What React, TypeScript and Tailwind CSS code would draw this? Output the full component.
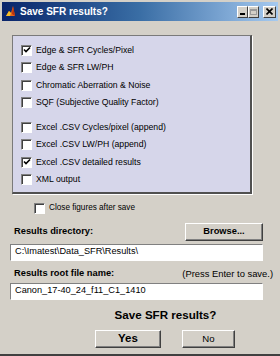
import React from 'react';

const sans = { fontFamily: '"Liberation Sans", Arial, sans-serif' };

function Check({ checked }: { checked?: boolean }) {
  return (
    <span className="w-[11px] h-[11px] shrink-0 bg-white border border-t-[#808080] border-l-[#808080] border-b-white border-r-white shadow-[inset_1px_1px_0_#404040] flex items-center justify-center">
      {checked && (
        <svg width="8" height="8" viewBox="0 0 8 8">
          <path d="M1 3.5 L3 5.5 L7 1.5" stroke="#000" strokeWidth="1.6" fill="none" />
        </svg>
      )}
    </span>
  );
}

function Row({ label, checked }: { label: string; checked?: boolean }) {
  return (
    <div className="h-[17.5px] flex items-center gap-[4px] pl-[8px]">
      <Check checked={checked} />
      <span className="text-[8.7px] text-black leading-none">{label}</span>
    </div>
  );
}

function WinBtn({ children, w, dim }: { children: React.ReactNode; w: string; dim?: boolean }) {
  return (
    <span
      className={`${w} h-[12px] bg-[#d4d0c8] border border-t-white border-l-white border-b-[#404040] border-r-[#404040] flex items-center justify-center ${dim ? 'text-[#9a9a9a]' : 'text-black'}`}
    >
      {children}
    </span>
  );
}

export default function App() {
  return (
    <div style={sans} className="w-[280px] h-[356px] bg-[#d4d0c8] pt-[2px] px-[2px] border-b-2 border-[#404040] overflow-hidden flex flex-col">
      {/* Title bar */}
      <div className="h-[19px] flex items-center bg-gradient-to-r from-[#0a246a] via-[#3a6ea5] to-[#a6caf0] pl-[2px] pr-[2px]">
        <svg width="13" height="13" viewBox="0 0 13 13" className="shrink-0">
          <path d="M2 11 L5 6 L7 8 L9 1 L11 11 Z" fill="#e8641b" />
          <path d="M5 6 L7 8 L6 11 L2 11 Z" fill="#f6c028" />
          <path d="M9 1 L11 11 L8 9 Z" fill="#b8330e" />
        </svg>
        <span className="ml-[3px] text-white font-bold text-[10px] leading-none">Save SFR results?</span>
        <div className="ml-auto flex items-center">
          <WinBtn w="w-[11px]">
            <span className="block w-[5px] h-[2px] bg-black mt-[5px]" />
          </WinBtn>
          <WinBtn w="w-[11px]" dim>
            <span className="block w-[7px] h-[6px] border border-t-2 border-[#9a9a9a]" />
          </WinBtn>
          <span className="w-[4px]" />
          <WinBtn w="w-[13px]">
            <svg width="7" height="7" viewBox="0 0 7 7">
              <path d="M0.5 0.5 L6.5 6.5 M6.5 0.5 L0.5 6.5" stroke="#000" strokeWidth="1.6" />
            </svg>
          </WinBtn>
        </div>
      </div>

      {/* Options panel */}
      <div className="mt-[14px] ml-[10px] w-[240px] h-[159px] bg-[#d6d6ea] border border-t-[#7a7a7a] border-l-[#7a7a7a] border-r-2 border-b-2 border-r-[#505050] border-b-[#505050] pt-[5.5px] shadow-[1px_1px_0_#ffffff]">
        <Row label="Edge & SFR Cycles/Pixel" checked />
        <Row label="Edge & SFR LW/PH" />
        <Row label="Chromatic Aberration & Noise" />
        <Row label="SQF (Subjective Quality Factor)" />
        <div className="h-[7px]" />
        <Row label="Excel .CSV Cycles/pixel (append)" />
        <Row label="Excel .CSV LW/PH (append)" />
        <Row label="Excel .CSV detailed results" checked />
        <Row label="XML output" />
      </div>

      <div className="mt-[5.5px] h-[17px] flex items-center gap-[4px] pl-[32px]">
        <Check />
        <span className="text-[8.2px] text-black leading-none">Close figures after save</span>
      </div>

      <div className="mt-[6px] pl-[12px] pr-[15px] flex items-center justify-between h-[18px]">
        <span className="text-[9.3px] font-bold text-black leading-none">Results directory:</span>
        <button className="w-[78px] h-[18px] bg-[#d4d0c8] border border-t-white border-l-white border-b-[#404040] border-r-[#404040] shadow-[inset_-1px_-1px_0_#808080] text-[9.3px] font-bold text-black leading-none">
          Browse...
        </button>
      </div>

      <div className="mt-[3px] ml-[8px] w-[253px] h-[17px] bg-white border border-t-[#808080] border-l-[#808080] border-b-white border-r-white flex items-center pl-[4px]">
        <span className="text-[9.2px] text-black leading-none">C:\Imatest\Data_SFR\Results\</span>
      </div>

      <div className="mt-[6px] pl-[12px] pr-[5px] flex items-center justify-between h-[14px]">
        <span className="text-[9.3px] font-bold text-black leading-none">Results root file name:</span>
        <span className="text-[9.4px] text-black leading-none">(Press Enter to save.)</span>
      </div>

      <div className="mt-[2px] ml-[8px] w-[253px] h-[17px] bg-white border border-t-[#808080] border-l-[#808080] border-b-white border-r-white flex items-center pl-[4px]">
        <span className="text-[9.2px] text-black leading-none">Canon_17-40_24_f11_C1_1410</span>
      </div>

      <div className="mt-[8px] h-[14px] flex items-center justify-center pl-[51px]">
        <span className="text-[11.6px] font-bold text-black leading-none">Save SFR results?</span>
      </div>

      <div className="mt-[8px] flex items-center pl-[93px] gap-[21px]">
        <button className="w-[66px] h-[18px] bg-[#d4d0c8] border border-t-white border-l-white border-b-[#404040] border-r-[#404040] shadow-[inset_-1px_-1px_0_#808080] text-[11.5px] font-bold text-black leading-none">
          Yes
        </button>
        <button className="w-[53px] h-[18px] bg-[#d4d0c8] border border-t-white border-l-white border-b-[#404040] border-r-[#404040] shadow-[inset_-1px_-1px_0_#808080] text-[9.6px] text-black leading-none">
          No
        </button>
      </div>
    </div>
  );
}
